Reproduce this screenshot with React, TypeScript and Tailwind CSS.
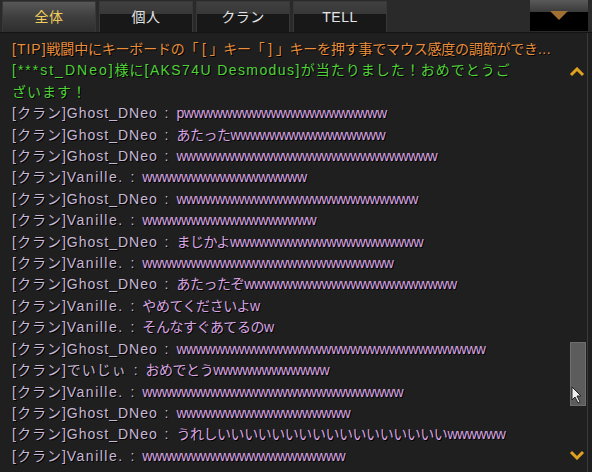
import React from "react";

const W = (n: number) => "w".repeat(n);

type Line = { name: string; msg: string };

const lines: Line[] = [
  { name: "Ghost_DNeo", msg: "p" + W(21) },
  { name: "Ghost_DNeo", msg: "あたった" + W(16) },
  { name: "Ghost_DNeo", msg: W(27) },
  { name: "Vanille.", msg: W(17) },
  { name: "Ghost_DNeo", msg: W(25) },
  { name: "Vanille.", msg: W(18) },
  { name: "Ghost_DNeo", msg: "まじかよ" + W(20) },
  { name: "Vanille.", msg: W(26) },
  { name: "Ghost_DNeo", msg: "あたったぞ" + W(22) },
  { name: "Vanille.", msg: "やめてくださいよw" },
  { name: "Vanille.", msg: "そんなすぐあてるのw" },
  { name: "Ghost_DNeo", msg: W(32) },
  { name: "でいじぃ", msg: "おめでとう" + W(12) },
  { name: "Vanille.", msg: W(27) },
  { name: "Ghost_DNeo", msg: W(18) },
  { name: "Ghost_DNeo", msg: "うれし" + "い".repeat(17) + W(6) },
  { name: "Vanille.", msg: W(21) },
];

const font = {
  fontFamily: '"Liberation Sans", "Noto Sans CJK JP", sans-serif',
};

function Tab({ label, active }: { label: string; active?: boolean }) {
  return (
    <div
      className={
        "relative w-[94px] h-[31px] flex items-center justify-center border-x border-t border-[#383838] overflow-hidden " +
        (active
          ? "bg-gradient-to-b from-[#585858] via-[#3e3e3e] to-[#2e2e2e]"
          : "bg-gradient-to-b from-[#404040] to-[#2c2c2c]")
      }
    >
      {!active && (
        <div className="absolute left-0 right-0 top-[12px] bottom-0 bg-[#181818]" />
      )}
      <span
        className={
          "relative text-[14px] tracking-[0.5px] " +
          (active ? "text-[#f0cc5a]" : "text-[#e4e4e4]")
        }
      >
        {label}
      </span>
    </div>
  );
}

export default function App() {
  return (
    <div
      className="relative w-[592px] h-[472px] overflow-hidden bg-[#1f1f1f]"
      style={font}
    >
      {/* tab bar */}
      <div className="flex h-[33px] items-end gap-[3px] pl-[2px] bg-[#2a2a2a] border-b border-[#141414]">
        <Tab label="全体" active />
        <Tab label="個人" />
        <Tab label="クラン" />
        <Tab label="TELL" />
        <div className="flex-1" />
        <div className="relative mr-[4px] self-start w-[58px] h-[31px] bg-black overflow-hidden">
          <div className="h-[12px] bg-gradient-to-b from-[#5a5a5a] to-[#3a3a3a]" />
          <svg
            className="absolute left-[20px] top-[11px]"
            width="18"
            height="9"
            viewBox="0 0 18 9"
          >
            <polygon points="0,0 18,0 9,9" fill="#a07032" />
          </svg>
        </div>
      </div>

      {/* chat area */}
      <div className="pl-[12px] pt-[6px] text-[14px] leading-[21.4px] whitespace-nowrap [text-shadow:1px_1px_0_#000]">
        <div className="text-[#e88e3c]">
          <span className="tracking-[1px]">[TIP]</span>
          <span className="tracking-[-0.2px]">
            戦闘中にキーボードの「 [ 」キー「 ] 」キーを押す事でマウス感度の調節ができ
          </span>
          <span className="tracking-[0.5px]">...</span>
        </div>
        <div className="text-[#4fd238]">
          <span className="tracking-[2px]">[***st_DNeo]</span>
          <span className="tracking-[1px]">様に</span>
          <span className="tracking-[1.4px]">[AKS74U Desmodus]</span>
          <span className="tracking-[1px]">が当たりました！おめでとうご</span>
        </div>
        <div className="text-[#4fd238] tracking-[1px]">ざいます！</div>
        {lines.map((l, i) => (
          <div key={i}>
            <span className="text-[#c8b8d6] tracking-[1px]">[クラン]</span>
            <span
              className={
                "text-[#c8b8d6] " +
                (l.name === "Vanille." ? "tracking-[1.5px]" : "tracking-[1px]")
              }
            >
              {l.name}
            </span>
            <span className="text-[#c8b8d6] tracking-[1px] [word-spacing:2px]">
              {" : "}
            </span>
            <span className="text-[#d9a5e2] tracking-[-0.45px]">{l.msg}</span>
          </div>
        ))}
      </div>

      {/* scrollbar */}
      <div className="absolute right-[4px] top-[33px] bottom-0 w-[1px] bg-[#3a3a3a]" />
      <svg
        className="absolute left-[569px] top-[67px]"
        width="16"
        height="10"
        viewBox="0 0 16 10"
      >
        <polyline
          points="2,8 8,2 14,8"
          fill="none"
          stroke="#e0a020"
          strokeWidth="3"
        />
      </svg>
      <div className="absolute left-[570px] top-[342px] w-[16px] h-[64px] bg-[#5c5c5c] border border-[#6e6e6e]" />
      <svg
        className="absolute left-[569px] top-[450px]"
        width="16"
        height="10"
        viewBox="0 0 16 10"
      >
        <polyline
          points="2,2 8,8 14,2"
          fill="none"
          stroke="#e0a020"
          strokeWidth="3"
        />
      </svg>
      {/* cursor */}
      <svg
        className="absolute left-[571px] top-[386px]"
        width="12"
        height="18"
        viewBox="0 0 12 18"
      >
        <path
          d="M1,1 L1,14 L4,11 L7,17 L9,16 L6,10 L10,10 Z"
          fill="#f0f0f0"
          stroke="#222"
          strokeWidth="1"
        />
      </svg>
    </div>
  );
}
